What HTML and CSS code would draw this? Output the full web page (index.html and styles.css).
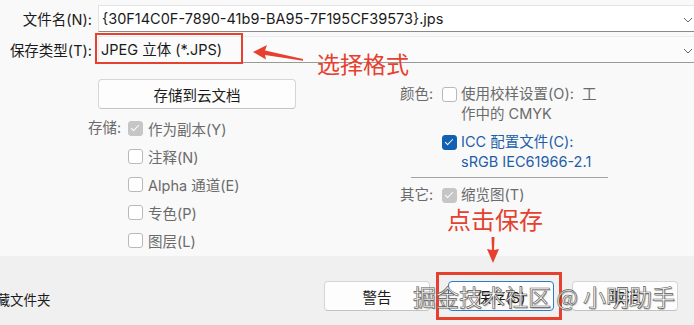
FILE: index.html
```html
<!DOCTYPE html>
<html lang="zh-CN">
<head>
  <meta charset="UTF-8" />
  <title>存储为</title>
  <link rel="stylesheet" href="styles.css">
</head>
<body>

<div class="dialog">
  <div class="main">
    <div class="field">
      <label class="field-label">文件名(N):</label>
      <div class="input">{30F14C0F-7890-41b9-BA95-7F195CF39573}.jps
        <svg class="chev" width="10" height="6" viewBox="0 0 10 6"><path d="M1 1 L5 5 L9 1" fill="none" stroke="#666" stroke-width="1"/></svg>
      </div>
    </div>
    <div class="field">
      <label class="field-label">保存类型(T):</label>
      <div class="input select">JPEG 立体 (*.JPS)
        <svg class="chev" width="10" height="6" viewBox="0 0 10 6"><path d="M1 1 L5 5 L9 1" fill="none" stroke="#666" stroke-width="1"/></svg>
      </div>
    </div>

    <div class="options">
      <div class="col-left">
        <button class="cloud-btn">存储到云文档</button>
        <div class="group">
          <span class="group-label">存储:</span>
          <ul class="checks">
            <li><span class="cb checked disabled"></span>作为副本(Y)</li>
            <li><span class="cb"></span>注释(N)</li>
            <li><span class="cb"></span>Alpha 通道(E)</li>
            <li><span class="cb"></span>专色(P)</li>
            <li><span class="cb"></span>图层(L)</li>
          </ul>
        </div>
      </div>

      <div class="col-right">
        <div class="group">
          <span class="group-label">颜色:</span>
          <ul class="checks wide">
            <li><span class="cb"></span><span>使用校样设置(O):&nbsp; 工<br>作中的 CMYK</span></li>
            <li class="active"><span class="cb checked blue"></span><span>ICC 配置文件(C):<br>sRGB IEC61966-2.1</span></li>
          </ul>
        </div>
        <div class="sep"></div>
        <div class="group">
          <span class="group-label">其它:</span>
          <ul class="checks wide">
            <li><span class="cb checked disabled"></span>缩览图(T)</li>
          </ul>
        </div>
      </div>
    </div>
  </div>

  <div class="footer">
    <span class="hide-folders">隐藏文件夹</span>
    <div class="actions">
      <button class="btn">警告</button>
      <button class="btn primary">保存(S)</button>
      <button class="btn">取消</button>
    </div>
  </div>

  <!-- 标注 -->
  <div class="mark mark-type"></div>
  <svg class="arrow arrow-left" width="56" height="22" viewBox="0 0 56 22">
    <polygon points="3,10 17,3 15,8.5 53,17 53,18.8 15,13 16,17.5" fill="#e6402e"/>
  </svg>
  <span class="note note-type">选择格式</span>

  <span class="note note-save">点击保存</span>
  <svg class="arrow arrow-down" width="14" height="28" viewBox="0 0 14 28">
    <polygon points="5.5,1 8.5,1 8,14 13,13 7,27 1,13 6,14" fill="#e6402e"/>
  </svg>
  <div class="mark mark-save"></div>

  <span class="watermark">掘金技术社区 @ 小明助手</span>
</div>

</body>
</html>
```

FILE: styles.css
```css
body {
  margin: 0;
  padding: 0;
  font-family: 'Inter', 'Noto Sans CJK SC', sans-serif;
  font-size: 14.5px;
  color: #1b1b1b;
  background: #f0f0f0;
  overflow: hidden;
}
.dialog {
  position: relative;
  width: 694px;
  height: 325px;
  overflow: hidden;
}
.main {
  height: 256px;
  background: #f9f9f9;
  padding-top: 5px;
  box-sizing: border-box;
}
.field {
  display: flex;
  align-items: center;
  height: 27px;
  margin-bottom: 4px;
}
.field-label {
  width: 92px;
  flex: none;
  text-align: right;
  margin-right: 6px;
  white-space: nowrap;
}
.input {
  position: relative;
  flex: none;
  width: 620px;
  height: 27px;
  box-sizing: border-box;
  padding-left: 3px;
  line-height: 26px;
  background: #fff;
  border: 1px solid #e3e3e3;
  border-bottom-color: #8a8a8a;
  white-space: nowrap;
}
.select {
  background: #fbfbfb;
  border-color: #ececec;
  border-bottom-color: #9a9a9a;
  padding-left: 2px;
}
.chev {
  position: absolute;
  left: 584px;
  top: 11px;
}

/* 选项区 */
.options {
  display: grid;
  grid-template-columns: 400px 1fr;
}
.col-left {
  padding: 12px 0 0 88px;
}
.cloud-btn {
  display: block;
  margin-left: 10px;
  width: 198px;
  height: 30px;
  background: #fdfdfd;
  border: 1px solid #d6d6d6;
  border-bottom-color: #c4c4c4;
  border-radius: 4px;
  font: inherit;
  color: #1b1b1b;
  padding: 0;
}
.group {
  display: flex;
  color: #6b6b6b;
}
.col-left .group {
  margin-top: 5px;
}
.group-label {
  width: 40px;
  flex: none;
  line-height: 28px;
}
.checks {
  list-style: none;
  margin: 0;
  padding: 0;
}
.checks li {
  display: flex;
  align-items: center;
  height: 28px;
  white-space: nowrap;
}
.cb {
  position: relative;
  flex: none;
  width: 15px;
  height: 15px;
  box-sizing: border-box;
  margin-right: 5px;
  background: #fff;
  border: 1px solid #b9b9b9;
  border-radius: 3px;
}
.cb.checked::after {
  content: "";
  position: absolute;
  left: 4px;
  top: 1px;
  width: 3px;
  height: 7px;
  border: solid #fff;
  border-width: 0 1.5px 1.5px 0;
  transform: rotate(45deg);
}
.cb.disabled {
  background: #c6c6c6;
  border-color: #c6c6c6;
}
.cb.blue {
  background: #1160b2;
  border-color: #1160b2;
}

.col-right {
  padding-top: 17px;
}
.col-right .group-label {
  width: 42px;
  line-height: 20px;
}
.checks.wide li {
  align-items: flex-start;
  height: auto;
  line-height: 20px;
}
.checks.wide li + li {
  margin-top: 8px;
}
.checks.wide .cb {
  margin-top: 3px;
  margin-right: 4px;
}
.checks li.active {
  color: #1d5fa8;
}
.sep {
  margin: 5px 0 0 11px;
  width: 197px;
  height: 1px;
  background: #a3a3a3;
}
.sep + .group {
  margin-top: 7px;
}

/* 底部 */
.footer {
  height: 69px;
  display: flex;
  justify-content: space-between;
  align-items: flex-start;
  background: #f0f0f0;
}
.hide-folders {
  margin: 34px 0 0 -17px;
  font-size: 13.5px;
  line-height: 20px;
}
.actions {
  display: flex;
  gap: 18px;
  padding: 25px 16px 0 0;
}
.btn {
  width: 106px;
  height: 30px;
  padding: 0;
  background: #fdfdfd;
  border: 1px solid #d6d6d6;
  border-bottom-color: #c2c2c2;
  border-radius: 4px;
  font: inherit;
  color: #1b1b1b;
}
.btn.primary {
  border: 1px solid #2b7bc9;
}

/* 标注 */
.mark {
  position: absolute;
  border: 2.5px solid #e6402e;
  box-sizing: border-box;
}
.mark-type {
  left: 95px;
  top: 33px;
  width: 148px;
  height: 31px;
}
.mark-save {
  left: 436px;
  top: 272px;
  width: 126px;
  height: 48px;
  border-width: 3px;
}
.arrow {
  position: absolute;
}
.arrow-left {
  left: 250px;
  top: 42px;
}
.arrow-down {
  left: 486px;
  top: 236px;
}
.note {
  position: absolute;
  color: #e6402e;
  font-family: 'Noto Sans CJK SC', sans-serif;
  line-height: 1;
}
.note-type {
  left: 317px;
  top: 52px;
  font-size: 23px;
}
.note-save {
  left: 447px;
  top: 207px;
  font-size: 24px;
}
.watermark {
  position: absolute;
  left: 413px;
  top: 285px;
  font-family: 'Noto Sans CJK SC', sans-serif;
  font-size: 23px;
  line-height: 1;
  white-space: nowrap;
  color: rgba(255, 255, 255, 0.92);
  -webkit-text-stroke: 0.6px #555;
  text-shadow: 1px 1px 1px rgba(0, 0, 0, 0.3);
}
```
